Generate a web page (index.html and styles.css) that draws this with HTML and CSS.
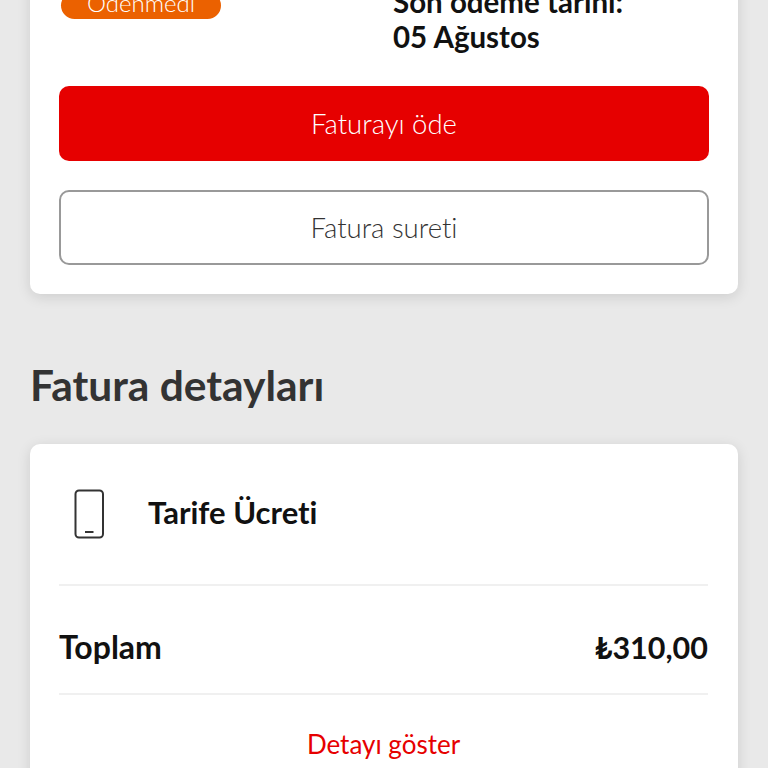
FILE: index.html
```html
<!DOCTYPE html>
<html lang="tr">
<head>
<meta charset="utf-8">
<title>Fatura</title>
<link rel="stylesheet" href="styles.css">
</head>
<body>
<main class="page">
  <section class="card summary">
    <div class="status-row">
      <div class="status-col"><span class="badge">Ödenmedi</span></div>
      <div class="due">
        <div>Son ödeme tarihi:</div>
        <div>05 Ağustos</div>
      </div>
    </div>
    <button class="btn btn-primary">Faturayı öde</button>
    <button class="btn btn-outline">Fatura sureti</button>
  </section>

  <h2 class="section-title">Fatura detayları</h2>

  <section class="card details">
    <div class="detail-head">
      <svg class="phone" width="32" height="50" viewBox="0 0 32 50" fill="none" stroke="#333" stroke-width="2">
        <rect x="1.5" y="1.5" width="27.5" height="47" rx="3.5"/>
        <path d="M11 43h8.5"/>
      </svg>
      <span class="detail-name">Tarife Ücreti</span>
    </div>
    <div class="total-row">
      <span class="total-label">Toplam</span>
      <span>₺310,00</span>
    </div>
    <a class="more">Detayı göster</a>
  </section>
</main>
</body>
</html>
```

FILE: styles.css
```css
* { box-sizing: border-box; }

html, body {
  margin: 0;
  height: 100%;
  overflow: hidden;
  background: #e9e9e9;
}

body {
  font-family: Lato, "Open Sans", sans-serif;
  font-variant-ligatures: none;
  color: #111;
}

/* The view is scrolled part-way down the bill */
.page {
  margin-top: -40px;
  padding: 0 30px;
}

.card {
  background: #fff;
  border-radius: 10px;
  box-shadow: 0 3px 14px rgba(0, 0, 0, 0.12);
}

.summary {
  padding: 0 29px 29px;
}

.status-row {
  display: flex;
  height: 126px;
  padding-top: 32px;
}

.status-col {
  width: 334px;
  padding-left: 2px;
}

.badge {
  display: flex;
  align-items: center;
  justify-content: center;
  width: 160px;
  height: 27px;
  padding-bottom: 6px;
  border-radius: 14px;
  background: #eb6100;
  color: #fff;
  font-size: 24px;
  font-weight: 300;
}

.due {
  font-size: 29.5px;
  font-weight: 700;
  line-height: 35px;
  margin-top: -8px;
  white-space: nowrap;
}

.btn {
  display: block;
  width: 100%;
  height: 75px;
  border-radius: 10px;
  font-family: inherit;
  font-variant-ligatures: none;
  font-size: 27.5px;
  font-weight: 300;
}

.btn-primary {
  border: 0;
  background: #e60000;
  color: #fff;
}

.btn-outline {
  margin-top: 29px;
  border: 2px solid #999;
  background: #fff;
  color: #333;
}

.section-title {
  margin: 64px 0 32px;
  font-size: 42.5px;
  line-height: 54px;
  font-weight: 700;
  color: #333;
}

.details {
  padding: 0 30px 0 29px;
  min-height: 400px;
}

.detail-head {
  display: flex;
  align-items: center;
  gap: 43px;
  height: 142px;
  padding-left: 15px;
  border-bottom: 2px solid #f0f0f0;
}

.detail-name {
  font-size: 31px;
  font-weight: 700;
  margin-top: -4px;
  margin-left: -1px;
}

.total-row {
  display: flex;
  justify-content: space-between;
  align-items: center;
  height: 109px;
  padding-top: 14px;
  border-bottom: 2px solid #f0f0f0;
  font-size: 30.5px;
  font-weight: 700;
}

.total-label {
  font-size: 32px;
}

.more {
  display: block;
  margin-top: 33px;
  text-align: center;
  color: #e60000;
  font-size: 26px;
  font-weight: 400;
}
```
